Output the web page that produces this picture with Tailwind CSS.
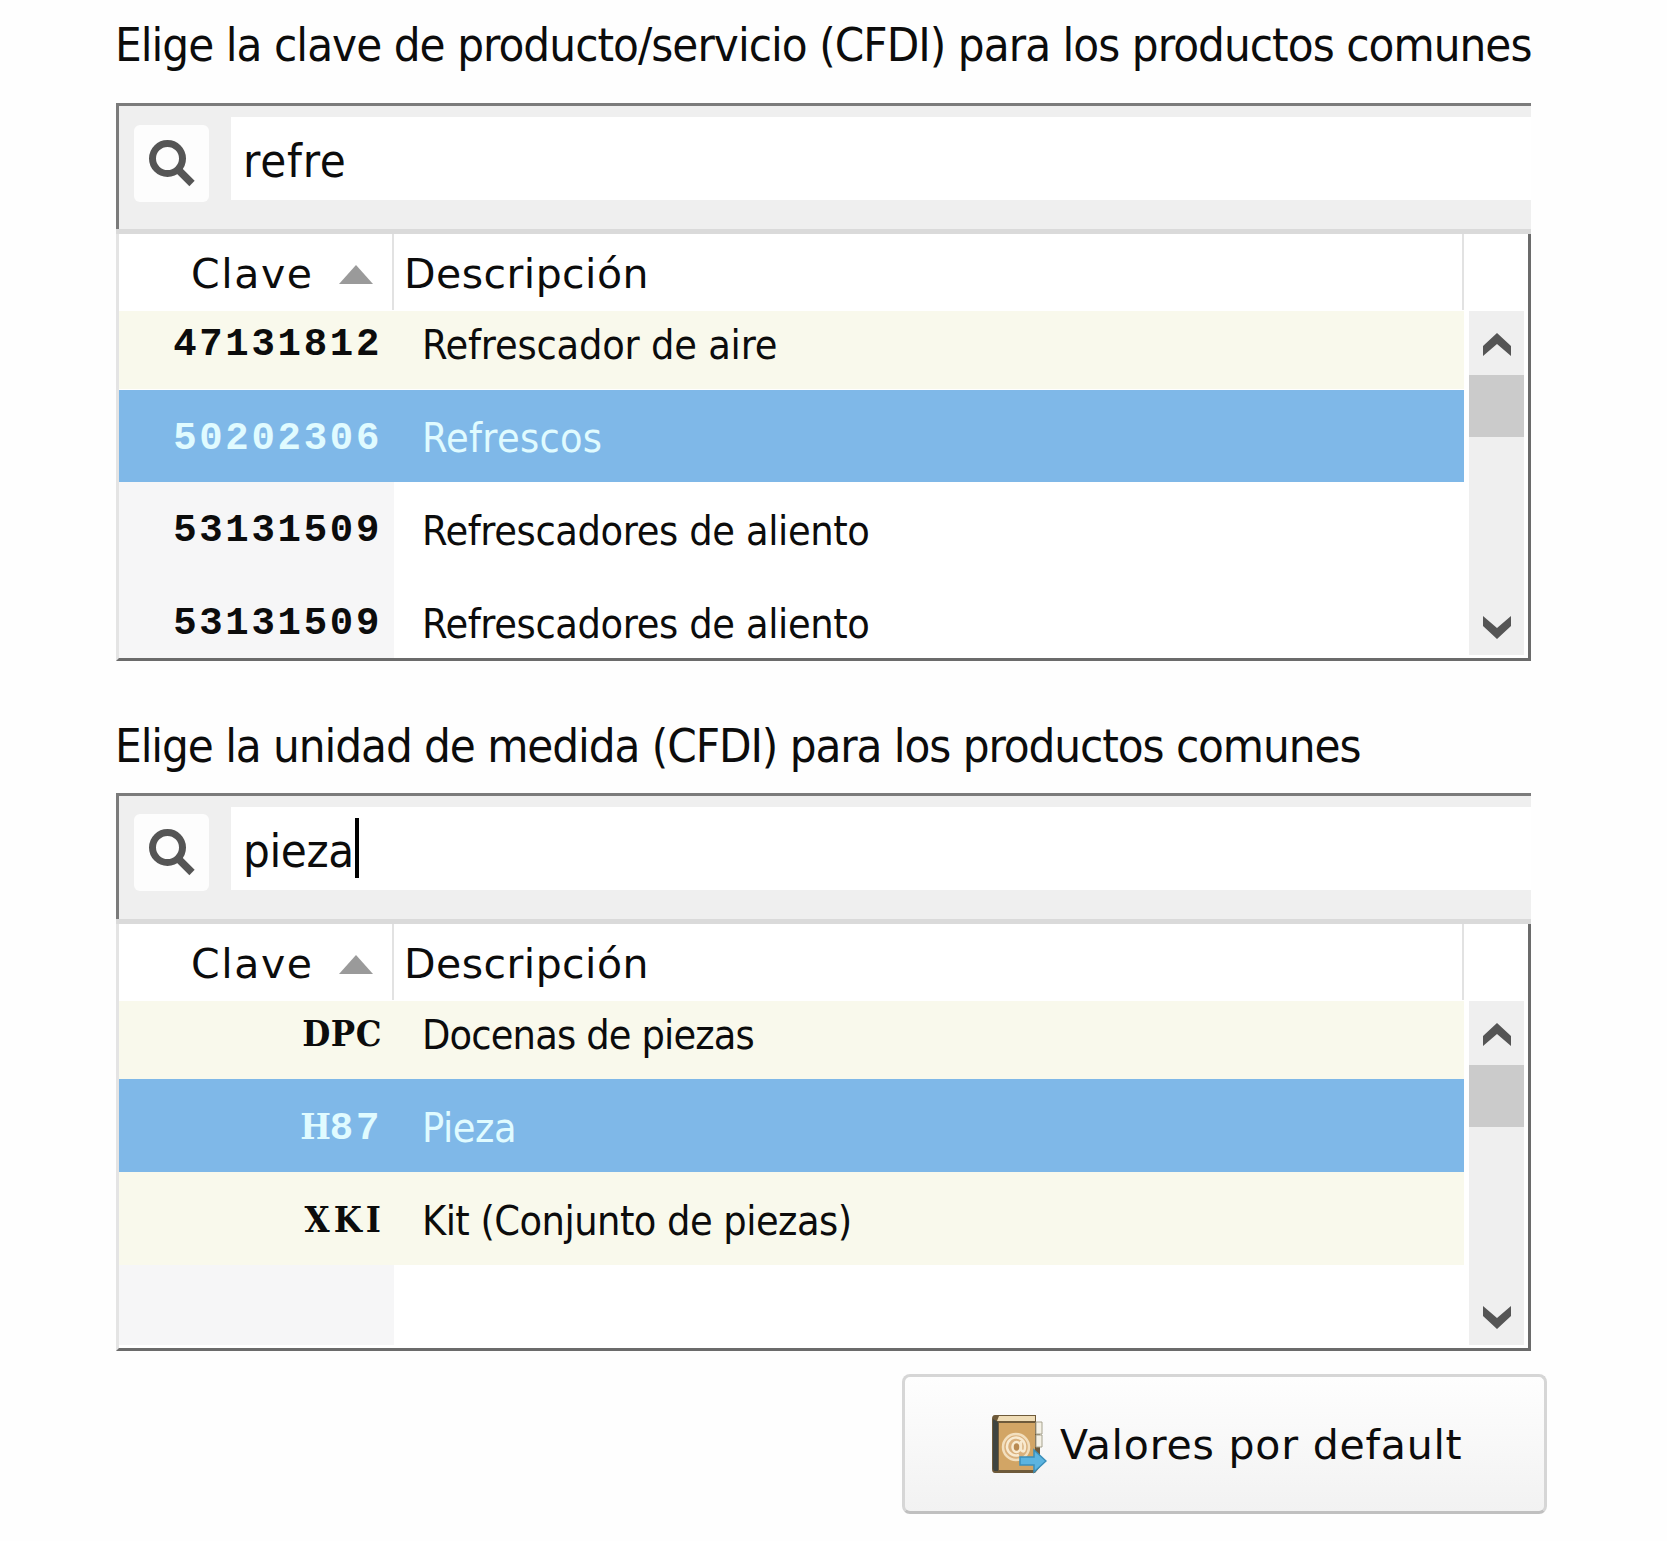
<!DOCTYPE html>
<html lang="es">
<head>
    <meta charset="UTF-8">
    <meta name="viewport" content="width=device-width, initial-scale=1.0">
    <script src="https://cdn.jsdelivr.net/npm/@tailwindcss/browser@4"></script>
    <title>Valores CFDI por default</title>
</head>
<body class="bg-[#fefefe] min-h-screen overflow-hidden text-[#0c0c0c] font-['DejaVu_Sans_Condensed','DejaVu_Sans',sans-serif]">

    <main class="ml-[116px] w-[1431px]">

        <!-- Clave de producto/servicio -->
        <h2 class="h-[103px] -ml-px text-[47px] leading-[90px] tracking-[-0.95px] whitespace-nowrap">Elige la clave de producto/servicio (CFDI) para los productos comunes</h2>

        <section class="w-[1415px]">
            <!-- Search -->
            <div class="h-[126px] border-t-3 border-l-3 border-[#7b7b7b] bg-[#efefef] flex">
                <button class="ml-[15px] mt-[19px] w-[75px] h-[77px] rounded-md bg-[#fdfdfd] flex items-center justify-center">
                    <svg class="w-[47px] h-[47px]" viewBox="0 0 47 47" fill="none" stroke="#555">
                        <circle cx="19.5" cy="18.5" r="15" stroke-width="7" />
                        <path d="M30 29.5L44 43.5" stroke-width="7.5" />
                    </svg>
                </button>
                <div class="ml-[22px] mt-[11px] h-[83px] flex-1 bg-white flex items-center pt-[3px] pl-[12px] text-[47px] leading-none tracking-[0.8px]">refre</div>
            </div>
            <div class="h-[5px] bg-[#dadada]"></div>

            <!-- Table -->
            <div class="h-[427px] border-l-3 border-l-[#e4e4e4] border-r-3 border-r-[#6b6b6b] border-b-3 border-b-[#6b6b6b] bg-white flex flex-col">
                <div class="h-[77px] shrink-0 flex font-['DejaVu_Sans',sans-serif] text-[41px] leading-none">
                    <div class="w-[275px] h-[76px] border-r-2 border-[#e2e2e2] flex items-center pl-[72px]">
                        <span class="pt-1 tracking-[1.6px]">Clave</span>
                        <svg class="ml-[25px] mt-[5px] w-[34px] h-[19px]" viewBox="0 0 34 19"><path d="M17 0L34 19H0z" fill="#9a9a9a" /></svg>
                    </div>
                    <div class="w-[1070px] h-[76px] border-r-2 border-[#e2e2e2] flex items-center pl-[10px]">
                        <span class="pt-[5px] tracking-[0.45px]">Descripción</span>
                    </div>
                </div>
                <div class="flex-1 min-h-0 flex">
                    <div class="w-[1345px] overflow-hidden text-[41px] leading-none whitespace-nowrap">
                        <div class="h-[93px] -mt-[15px] bg-[#f9f9ec] flex items-center pt-[5px]">
                            <span class="w-[275px] pr-[12px] pt-px text-right font-['Liberation_Mono',monospace] font-bold text-[39px] tracking-[2.7px]">47131812</span>
                            <span class="pl-[28px] tracking-[-0.2px]">Refrescador de aire</span>
                        </div>
                        <div class="h-[93px] border-t border-white bg-[#7fb8e8] text-[#e0fbff] flex items-center pt-[5px]">
                            <span class="w-[275px] pr-[12px] pt-px text-right font-['Liberation_Mono',monospace] font-bold text-[39px] tracking-[2.7px]">50202306</span>
                            <span class="pl-[28px] tracking-[0.3px]">Refrescos</span>
                        </div>
                        <div class="h-[93px] flex">
                            <span class="w-[275px] pr-[12px] pt-[6px] bg-[#f6f6f7] flex items-center justify-end font-['Liberation_Mono',monospace] font-bold text-[39px] tracking-[2.7px]">53131509</span>
                            <span class="pl-[28px] pt-[6px] flex items-center tracking-[-0.37px]">Refrescadores de aliento</span>
                        </div>
                        <div class="h-[93px] flex">
                            <span class="w-[275px] pr-[12px] pt-[6px] bg-[#f6f6f7] flex items-center justify-end font-['Liberation_Mono',monospace] font-bold text-[39px] tracking-[2.7px]">53131509</span>
                            <span class="pl-[28px] pt-[6px] flex items-center tracking-[-0.37px]">Refrescadores de aliento</span>
                        </div>
                    </div>
                    <!-- Scrollbar -->
                    <div class="ml-[5px] mb-[3px] w-[55px] bg-[#efefef] flex flex-col items-center">
                        <svg class="mt-[22px] w-[28px] h-[23px]" viewBox="0 0 28 23"><path d="M14 0L28 13V23L14 11L0 23V13z" fill="#555" /></svg>
                        <div class="mt-[19px] w-full h-[62px] bg-[#cbcbcb]"></div>
                        <svg class="mt-auto mb-[16px] w-[28px] h-[23px]" viewBox="0 0 28 23"><path d="M14 23L28 10V0L14 12L0 0V10z" fill="#555" /></svg>
                    </div>
                </div>
            </div>
        </section>

        <!-- Unidad de medida -->
        <h2 class="h-[132px] pt-[60px] -ml-px text-[47px] leading-[49px] tracking-[-1.06px] whitespace-nowrap">Elige la unidad de medida (CFDI) para los productos comunes</h2>

        <section class="w-[1415px]">
            <!-- Search -->
            <div class="h-[126px] border-t-3 border-l-3 border-[#7b7b7b] bg-[#efefef] flex">
                <button class="ml-[15px] mt-[18px] w-[75px] h-[77px] rounded-md bg-[#fdfdfd] flex items-center justify-center">
                    <svg class="w-[47px] h-[47px]" viewBox="0 0 47 47" fill="none" stroke="#555">
                        <circle cx="19.5" cy="18.5" r="15" stroke-width="7" />
                        <path d="M30 29.5L44 43.5" stroke-width="7.5" />
                    </svg>
                </button>
                <div class="ml-[22px] mt-[11px] h-[83px] flex-1 bg-white flex items-center pt-[3px] pl-[12px] text-[47px] leading-none tracking-[-0.4px]">
                    pieza<span class="ml-px -mt-[5px] w-[4px] h-[60px] bg-black"></span>
                </div>
            </div>
            <div class="h-[5px] bg-[#dadada]"></div>

            <!-- Table -->
            <div class="h-[427px] border-l-3 border-l-[#e4e4e4] border-r-3 border-r-[#6b6b6b] border-b-3 border-b-[#6b6b6b] bg-white flex flex-col">
                <div class="h-[77px] shrink-0 flex font-['DejaVu_Sans',sans-serif] text-[41px] leading-none">
                    <div class="w-[275px] h-[76px] border-r-2 border-[#e2e2e2] flex items-center pl-[72px]">
                        <span class="pt-1 tracking-[1.6px]">Clave</span>
                        <svg class="ml-[25px] mt-[5px] w-[34px] h-[19px]" viewBox="0 0 34 19"><path d="M17 0L34 19H0z" fill="#9a9a9a" /></svg>
                    </div>
                    <div class="w-[1070px] h-[76px] border-r-2 border-[#e2e2e2] flex items-center pl-[10px]">
                        <span class="pt-[5px] tracking-[0.45px]">Descripción</span>
                    </div>
                </div>
                <div class="flex-1 min-h-0 flex">
                    <div class="w-[1345px] overflow-hidden text-[41px] leading-none whitespace-nowrap">
                        <div class="h-[93px] -mt-[15px] bg-[#f9f9ec] flex items-center pt-[5px]">
                            <span class="w-[275px] pr-[12px] pb-[5px] text-right font-['DejaVu_Serif_Condensed','DejaVu_Serif',serif] font-bold text-[36px] tracking-[0.5px]">DPC</span>
                            <span class="pl-[28px] tracking-[-0.84px]">Docenas de piezas</span>
                        </div>
                        <div class="h-[93px] bg-[#7fb8e8] text-[#e0fbff] flex items-center pt-[5px]">
                            <span class="w-[275px] pr-[12px] text-right font-['Liberation_Mono',monospace] font-bold text-[39px] tracking-[2.7px]"><span class="font-['DejaVu_Serif_Condensed','DejaVu_Serif',serif] text-[36px] tracking-[-1px]">H</span>87</span>
                            <span class="pl-[28px] tracking-[-0.4px]">Pieza</span>
                        </div>
                        <div class="h-[93px] bg-[#f9f9ec] flex items-center pt-[5px]">
                            <span class="w-[275px] pr-[9px] pb-[5px] text-right font-['DejaVu_Serif_Condensed','DejaVu_Serif',serif] font-bold text-[36px] tracking-[4px]">XKI</span>
                            <span class="pl-[28px] tracking-[-0.53px]">Kit (Conjunto de piezas)</span>
                        </div>
                        <div class="h-[80px] w-[275px] bg-[#f6f6f7]"></div>
                    </div>
                    <!-- Scrollbar -->
                    <div class="ml-[5px] mb-[3px] w-[55px] bg-[#efefef] flex flex-col items-center">
                        <svg class="mt-[22px] w-[28px] h-[23px]" viewBox="0 0 28 23"><path d="M14 0L28 13V23L14 11L0 23V13z" fill="#555" /></svg>
                        <div class="mt-[19px] w-full h-[62px] bg-[#cbcbcb]"></div>
                        <svg class="mt-auto mb-[16px] w-[28px] h-[23px]" viewBox="0 0 28 23"><path d="M14 23L28 10V0L14 12L0 0V10z" fill="#555" /></svg>
                    </div>
                </div>
            </div>
        </section>

        <button class="mt-[23px] ml-auto w-[645px] h-[140px] rounded-lg border-3 border-[#d6d6d6] border-b-[#c0c0c0] bg-linear-to-b from-[#fefefe] to-[#f2f2f2] flex items-center pl-[86px] font-['DejaVu_Sans',sans-serif] text-[41px] leading-none tracking-[0.8px] whitespace-nowrap">
            <!-- Address book -->
            <svg class="w-[56px] h-[62px] shrink-0" viewBox="0 0 56 62">
                <path d="M4 2h41v8h4v44l-5 6H4q-3 0-3-4V6q0-4 3-4z" fill="#6e5a3a" />
                <path d="M8 3h36v5H6z" fill="#efdcb6" />
                <path d="M8 10h36v47H8z" fill="#d2a565" />
                <path d="M2 6l5 3v49H4q-2 0-2-3z" fill="#3f4440" />
                <path d="M45 9h6v12h-6zM45 22h6v12h-6z" fill="#f4f1e6" stroke="#a6a28e" />
                <circle cx="25" cy="34" r="13" fill="#d9b07c" stroke="#f2dfbe" stroke-width="2.5" />
                <path d="M30 28v9q4 4 4-4a9 9 0 1 0-6 9" fill="none" stroke="#f8ead0" stroke-width="2.5" />
                <ellipse cx="25.5" cy="34" rx="4" ry="5" fill="#b98a52" stroke="#f8ead0" stroke-width="2.5" />
                <path d="M29 44h14v-7l12 11l-12 11v-7H29z" fill="#5cb4e0" stroke="#3a8fba" stroke-width="1.5" />
            </svg>
            <span class="ml-[13px] pt-[3px]">Valores por default</span>
        </button>
    </main>
</body>
</html>
